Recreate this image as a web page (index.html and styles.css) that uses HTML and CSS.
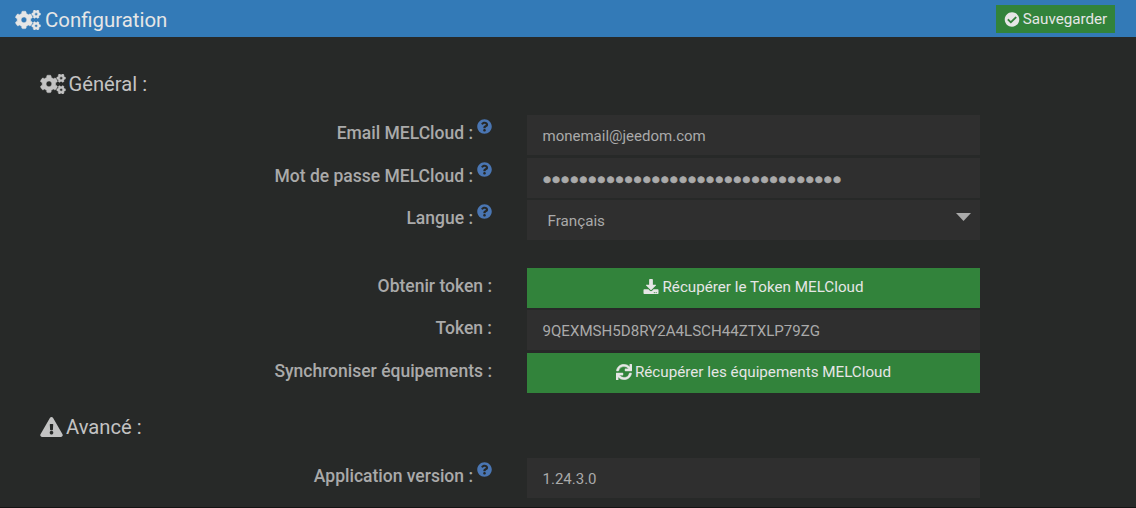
FILE: index.html
```html
<!DOCTYPE html>
<html lang="fr">
<head>
<meta charset="utf-8">
<title>Configuration</title>
<link rel="stylesheet" href="styles.css">
</head>
<body>
<svg class="sprite" aria-hidden="true">
  <symbol id="small-cog" viewBox="0 0 640 512" overflow="visible"><path d="M512.1 191l-8.2 14.3c-3 5.3-9.4 7.5-15.1 5.4-11.8-4.4-22.6-10.7-32.1-18.6-4.6-3.8-5.8-10.5-2.8-15.7l8.2-14.3c-6.9-8-12.3-17.3-15.9-27.4h-16.5c-6 0-11.2-4.3-12.2-10.3-2-12-2.1-24.6 0-37.1 1-6 6.2-10.4 12.2-10.4h16.5c3.6-10.1 9-19.4 15.9-27.4l-8.2-14.3c-3-5.2-1.9-11.9 2.8-15.7 9.5-7.9 20.4-14.2 32.1-18.6 5.7-2.1 12.1.1 15.1 5.4l8.2 14.3c10.5-1.9 21.2-1.9 31.7 0L552 6.3c3-5.3 9.4-7.5 15.1-5.4 11.8 4.4 22.6 10.7 32.1 18.6 4.6 3.8 5.8 10.5 2.8 15.7l-8.2 14.3c6.9 8 12.3 17.3 15.9 27.4h16.5c6 0 11.2 4.3 12.2 10.3 2 12 2.1 24.6 0 37.1-1 6-6.2 10.4-12.2 10.4h-16.5c-3.6 10.1-9 19.4-15.9 27.4l8.2 14.3c3 5.2 1.9 11.9-2.8 15.7-9.5 7.9-20.4 14.2-32.1 18.6-5.7 2.1-12.1-.1-15.1-5.4l-8.2-14.3c-10.4 1.9-21.2 1.9-31.7 0zm-10.5-58.8c38.5 29.6 82.4-14.3 52.8-52.8-38.5-29.7-82.4 14.3-52.8 52.8z"/></symbol>
  <symbol id="cogs" viewBox="0 0 640 512">
    <use href="#small-cog" width="640" height="512"/>
    <use href="#small-cog" y="298.7" width="640" height="512"/>
    <path d="M386.3 286.1l33.7 16.8c10.1 5.8 14.5 18.1 10.5 29.1-8.9 24.2-26.4 46.4-42.6 65.8-7.4 8.9-20.2 11.1-30.3 5.3l-29.1-16.8c-16 13.7-34.6 24.6-54.9 31.7v33.6c0 11.6-8.3 21.6-19.7 23.6-24.6 4.2-50.4 4.4-75.9 0-11.5-2-20-11.9-20-23.6V418c-20.3-7.2-38.9-18-54.9-31.7L74 403c-10 5.8-22.9 3.6-30.3-5.3-16.2-19.4-33.3-41.6-42.2-65.7-4-10.9.4-23.2 10.5-29.1l33.3-16.8c-3.9-20.9-3.9-42.4 0-63.4L12 205.8c-10.1-5.8-14.6-18.1-10.5-29 8.9-24.2 26-46.4 42.2-65.8 7.4-8.9 20.2-11.1 30.3-5.3l29.1 16.8c16-13.7 34.6-24.6 54.9-31.7V57.1c0-11.5 8.2-21.5 19.6-23.5 24.6-4.2 50.5-4.4 76-.1 11.5 2 20 11.9 20 23.6v33.6c20.3 7.2 38.9 18 54.9 31.7l29.1-16.8c10-5.8 22.9-3.6 30.3 5.3 16.2 19.4 33.2 41.6 42.1 65.8 4 10.9.1 23.2-10 29.1l-33.7 16.8c3.9 21 3.9 42.5 0 63.5zm-117.6 21.1c59.2-77-28.7-164.9-105.7-105.7-59.2 77 28.7 164.9 105.7 105.7z"/>
  </symbol>
  <symbol id="check" viewBox="0 0 512 512"><path d="M504 256c0 136.967-111.033 248-248 248S8 392.967 8 256 119.033 8 256 8s248 111.033 248 248zM227.314 387.314l184-184c6.248-6.248 6.248-16.379 0-22.627l-22.627-22.627c-6.248-6.249-16.379-6.249-22.628 0L216 308.118l-70.059-70.059c-6.248-6.248-16.379-6.248-22.628 0l-22.627 22.627c-6.248 6.248-6.248 16.379 0 22.627l104 104c6.249 6.249 16.379 6.249 22.628.001z"/></symbol>
  <symbol id="question" viewBox="0 0 512 512"><path d="M504 256c0 136.997-111.043 248-248 248S8 392.997 8 256C8 119.083 119.043 8 256 8s248 111.083 248 248zM262.655 90c-54.497 0-89.255 22.957-116.549 63.758-3.536 5.286-2.353 12.415 2.715 16.258l34.699 26.31c5.205 3.947 12.621 3.008 16.665-2.122 17.864-22.658 30.113-35.797 57.303-35.797 20.429 0 45.698 13.148 45.698 32.958 0 14.976-12.363 22.667-32.534 33.976C247.128 238.528 216 254.941 216 296v4c0 6.627 5.373 12 12 12h56c6.627 0 12-5.373 12-12v-1.333c0-28.462 83.186-29.647 83.186-106.667 0-58.002-60.165-102-116.531-102zM256 338c-25.365 0-46 20.635-46 46 0 25.364 20.635 46 46 46s46-20.636 46-46c0-25.365-20.635-46-46-46z"/></symbol>
  <symbol id="download" viewBox="0 0 512 512"><path d="M216 0h80c13.3 0 24 10.700 24 24v168h87.700c17.800 0 26.700 21.500 14.100 34.100L269.700 378.300c-7.500 7.500-19.800 7.500-27.300 0L90.100 226.100c-12.600-12.600-3.700-34.100 14.100-34.100H192V24c0-13.300 10.700-24 24-24zm296 376v112c0 13.300-10.700 24-24 24H24c-13.300 0-24-10.700-24-24V376c0-13.300 10.700-24 24-24h146.700l49 49c20.100 20.100 52.500 20.100 72.600 0l49-49H488c13.300 0 24 10.700 24 24zm-124 88c0-11-9-20-20-20s-20 9-20 20 9 20 20 20 20-9 20-20zm64 0c0-11-9-20-20-20s-20 9-20 20 9 20 20 20 20-9 20-20z"/></symbol>
  <symbol id="sync" viewBox="0 0 512 512"><path d="M440.650 12.570l4 82.770A247.160 247.160 0 0 0 255.830 8C134.730 8 33.910 94.920 12.290 209.820A12 12 0 0 0 24.090 224h49.050a12 12 0 0 0 11.670-9.260 175.910 175.910 0 0 1 317-56.940l-101.460-4.860a12 12 0 0 0-12.570 12v47.410a12 12 0 0 0 12 12H500a12 12 0 0 0 12-12V12a12 12 0 0 0-12-12h-47.370a12 12 0 0 0-11.980 12.570zM255.830 432a175.610 175.610 0 0 1-146-77.800l101.800 4.870a12 12 0 0 0 12.570-12v-47.400a12 12 0 0 0-12-12H12a12 12 0 0 0-12 12V500a12 12 0 0 0 12 12h47.350a12 12 0 0 0 12-12.600l-4.150-82.570A247.170 247.170 0 0 0 255.830 504c121.110 0 221.930-86.920 243.550-201.820a12 12 0 0 0-11.800-14.180h-49.050a12 12 0 0 0-11.670 9.260A175.860 175.860 0 0 1 255.830 432z"/></symbol>
  <symbol id="warning" viewBox="0 0 576 512"><path d="M569.517 440.013C587.975 472.007 564.806 512 527.940 512H48.054c-36.937 0-59.999-40.055-41.577-71.987L246.423 23.985c18.467-32.009 64.720-31.951 83.154 0l239.940 416.028zM288 354c-25.405 0-46 20.595-46 46s20.595 46 46 46 46-20.595 46-46-20.595-46-46-46zm-43.673-165.346l7.418 136c.347 6.364 5.609 11.346 11.982 11.346h48.546c6.373 0 11.635-4.982 11.982-11.346l7.418-136c.375-6.874-5.098-12.654-11.982-12.654h-63.383c-6.884 0-12.356 5.780-11.981 12.654z"/></symbol>
</svg>

<header class="header">
  <h1 class="title"><svg class="icon icon-cogs"><use href="#cogs"/></svg>Configuration</h1>
  <button class="save"><svg class="icon icon-button"><use href="#check"/></svg>Sauvegarder</button>
</header>

<main class="panel">
  <h2 class="legend"><svg class="icon icon-cogs"><use href="#cogs"/></svg>Général :</h2>
  <div class="group">
    <div class="row">
      <label class="label">Email MELCloud : <svg class="icon help"><use href="#question"/></svg></label>
      <div class="field">monemail@jeedom.com</div>
    </div>
    <div class="row">
      <label class="label">Mot de passe MELCloud : <svg class="icon help"><use href="#question"/></svg></label>
      <div class="field password">●●●●●●●●●●●●●●●●●●●●●●●●●●●●●●●●●</div>
    </div>
    <div class="row">
      <label class="label">Langue : <svg class="icon help"><use href="#question"/></svg></label>
      <div class="field select"><span>Français</span><svg class="caret" viewBox="0 0 15 8"><path d="M0 0h15L7.500 8z"/></svg></div>
    </div>
  </div>
  <div class="group">
    <div class="row">
      <label class="label">Obtenir token :</label>
      <button class="action"><svg class="icon icon-button"><use href="#download"/></svg>Récupérer le Token MELCloud</button>
    </div>
    <div class="row">
      <label class="label">Token :</label>
      <div class="field token">9QEXMSH5D8RY2A4LSCH44ZTXLP79ZG</div>
    </div>
    <div class="row">
      <label class="label">Synchroniser équipements :</label>
      <button class="action"><svg class="icon icon-button icon-sync"><use href="#sync"/></svg>Récupérer les équipements MELCloud</button>
    </div>
  </div>
  <h2 class="legend advanced"><svg class="icon icon-warning"><use href="#warning"/></svg>Avancé :</h2>
  <div class="group">
    <div class="row">
      <label class="label">Application version : <svg class="icon help"><use href="#question"/></svg></label>
      <div class="field">1.24.3.0</div>
    </div>
  </div>
</main>
</body>
</html>
```
FILE: styles.css
```css
* {
  box-sizing: border-box;
}

body {
  margin: 0;
  height: 508px;
  overflow: hidden;
  background: #272928;
  border-bottom: 1px solid #141414;
  color: #aaa;
  font-family: Roboto, "Liberation Sans", sans-serif;
  font-size: 15px;
}

.sprite {
  display: none;
}

.icon {
  flex: none;
  fill: currentColor;
}

.icon-cogs {
  width: 26px;
  height: 20px;
  margin-right: 4px;
  stroke: currentColor;
  stroke-width: 12px;
}

.icon-warning {
  width: 23px;
  height: 20px;
  margin-right: 3px;
}

.icon-button {
  width: 16px;
  height: 15px;
  margin-right: 3px;
}

.icon-sync {
  height: 16px;
  stroke: currentColor;
  stroke-width: 14px;
}

.header {
  display: flex;
  justify-content: space-between;
  height: 37px;
  padding: 5px 21px 4px 15px;
  background: #337ab7;
  color: #e6e6e6;
}

.title,
.legend {
  display: flex;
  align-items: center;
  margin: 0;
  font-size: 20px;
  font-weight: 400;
}

.title {
  height: 29px;
  font-size: 20.4px;
}

.save,
.action {
  display: flex;
  align-items: center;
  justify-content: center;
  border: 0;
  padding: 0;
  background: #32833b;
  color: #e6e6e6;
  font: inherit;
  font-size: 15.200px;
}

.save {
  width: 119px;
  height: 28px;
}

.panel {
  padding: 35px 40px 0;
}

.legend {
  height: 24px;
  font-size: 20.2px;
  color: #c3c3c3;
}

.legend .icon-cogs {
  margin-right: 2.5px;
}

.group {
  padding-top: 19px;
}

.group + .group {
  padding-top: 25px;
}

.advanced {
  margin-top: 20px;
}

.row {
  display: grid;
  grid-template-columns: 452px 453px;
  column-gap: 35px;
  height: 42.5px;
}

.label {
  display: flex;
  justify-content: flex-end;
  padding-top: 7px;
  font-size: 17.5px;
  font-weight: 500;
  line-height: 22px;
  white-space: nowrap;
}

.help {
  width: 15px;
  height: 15px;
  margin: -3px 0 0 4px;
  color: #4a76b3;
}

.field {
  height: 40px;
  padding-left: 15.5px;
  background: #2f2f2f;
  line-height: 42px;
}

.password {
  -webkit-text-stroke: 0.7px currentColor;
}

.token {
  font-size: 15.1px;
}

.select {
  display: flex;
  justify-content: space-between;
  padding: 0 9px 0 20.5px;
  font-size: 15.2px;
}

.caret {
  width: 15px;
  height: 8px;
  margin-top: 13px;
  fill: #aaa;
}

.action {
  height: 40px;
  padding-bottom: 2px;
}
```
